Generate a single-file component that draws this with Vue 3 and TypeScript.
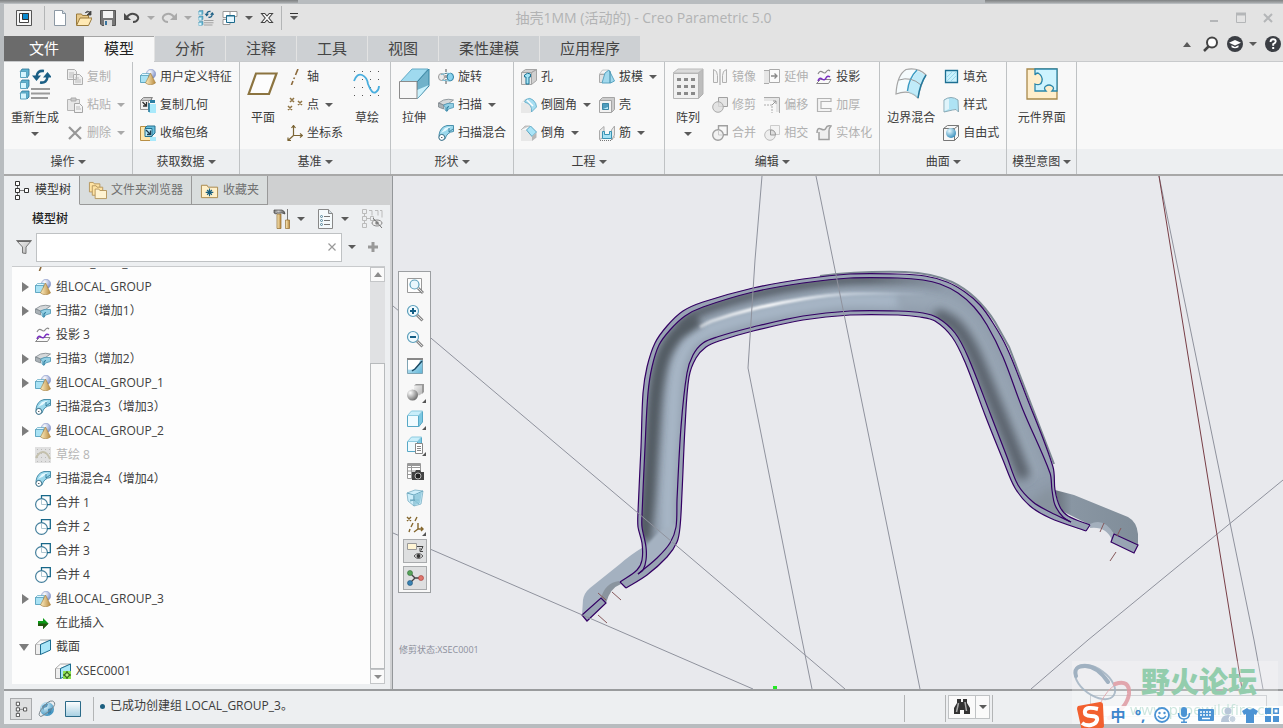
<script setup lang="ts">
import { ref } from 'vue'

interface Tool { label: string; icon: string; drop?: boolean; off?: boolean }
interface Block { big?: boolean; tools: Tool[] }
interface Group { title: string; blocks: Block[] }
interface Node { label: string; icon: string; state?: 'open' | 'closed'; off?: boolean; deep?: boolean }
type Pt = [number, number]

const tabs = ['分析', '注释', '工具', '视图', '柔性建模', '应用程序']

const groups: Group[] = [
  { title: '操作', blocks: [
    { big: true, tools: [{ label: '重新生成', icon: 'regen', drop: true }] },
    { tools: [{ label: '复制', icon: 'copy', off: true }, { label: '粘贴', icon: 'paste', drop: true, off: true }, { label: '删除', icon: 'delete', drop: true, off: true }] },
  ] },
  { title: '获取数据', blocks: [
    { tools: [{ label: '用户定义特征', icon: 'udf' }, { label: '复制几何', icon: 'copygeom' }, { label: '收缩包络', icon: 'shrink' }] },
  ] },
  { title: '基准', blocks: [
    { big: true, tools: [{ label: '平面', icon: 'plane' }] },
    { tools: [{ label: '轴', icon: 'axis' }, { label: '点', icon: 'point', drop: true }, { label: '坐标系', icon: 'csys' }] },
    { big: true, tools: [{ label: '草绘', icon: 'sketch' }] },
  ] },
  { title: '形状', blocks: [
    { big: true, tools: [{ label: '拉伸', icon: 'extrude' }] },
    { tools: [{ label: '旋转', icon: 'revolve' }, { label: '扫描', icon: 'sweep', drop: true }, { label: '扫描混合', icon: 'sweptblend' }] },
  ] },
  { title: '工程', blocks: [
    { tools: [{ label: '孔', icon: 'hole' }, { label: '倒圆角', icon: 'round', drop: true }, { label: '倒角', icon: 'chamfer', drop: true }] },
    { tools: [{ label: '拔模', icon: 'draft', drop: true }, { label: '壳', icon: 'shell' }, { label: '筋', icon: 'rib', drop: true }] },
  ] },
  { title: '编辑', blocks: [
    { big: true, tools: [{ label: '阵列', icon: 'pattern', drop: true }] },
    { tools: [{ label: '镜像', icon: 'mirror', off: true }, { label: '修剪', icon: 'trim', off: true }, { label: '合并', icon: 'mergeoff', off: true }] },
    { tools: [{ label: '延伸', icon: 'extend', off: true }, { label: '偏移', icon: 'offset', off: true }, { label: '相交', icon: 'intersect', off: true }] },
    { tools: [{ label: '投影', icon: 'project' }, { label: '加厚', icon: 'thicken', off: true }, { label: '实体化', icon: 'solidify', off: true }] },
  ] },
  { title: '曲面', blocks: [
    { big: true, tools: [{ label: '边界混合', icon: 'boundary' }] },
    { tools: [{ label: '填充', icon: 'fill' }, { label: '样式', icon: 'style' }, { label: '自由式', icon: 'freestyle' }] },
  ] },
  { title: '模型意图', blocks: [
    { big: true, tools: [{ label: '元件界面', icon: 'puzzle' }] },
  ] },
]

const nodes: Node[] = [
  { label: 'HAND_GRIP_1', icon: 'axis' },
  { label: '组LOCAL_GROUP', icon: 'udf', state: 'closed' },
  { label: '扫描2（增加1）', icon: 'sweep', state: 'closed' },
  { label: '投影 3', icon: 'project' },
  { label: '扫描3（增加2）', icon: 'sweep', state: 'closed' },
  { label: '组LOCAL_GROUP_1', icon: 'udf', state: 'closed' },
  { label: '扫描混合3（增加3）', icon: 'sweptblend' },
  { label: '组LOCAL_GROUP_2', icon: 'udf', state: 'closed' },
  { label: '草绘 8', icon: 'sketchoff', off: true },
  { label: '扫描混合4（增加4）', icon: 'sweptblend' },
  { label: '合并 1', icon: 'merge' },
  { label: '合并 2', icon: 'merge' },
  { label: '合并 3', icon: 'merge' },
  { label: '合并 4', icon: 'merge' },
  { label: '组LOCAL_GROUP_3', icon: 'udf', state: 'closed' },
  { label: '在此插入', icon: 'insert' },
  { label: '截面', icon: 'section', state: 'open' },
  { label: 'XSEC0001', icon: 'xsec', deep: true },
]

const viewTools = [
  { icon: 'refit', name: '重新调整' }, { icon: 'zoomin', name: '放大' }, { icon: 'zoomout', name: '缩小' },
  { icon: 'repaint', name: '重画' }, { icon: 'render', name: '渲染选项', more: true }, { icon: 'display', name: '显示样式', more: true },
  { icon: 'saved', name: '已保存方向', more: true }, { icon: 'viewmgr', name: '视图管理器' }, { icon: 'persp', name: '透视图' },
  { icon: 'datum', name: '基准显示过滤器', more: true }, { icon: 'annot', name: '注释显示', on: true }, { icon: 'spin', name: '旋转中心', on: true },
]

const imeTools = ['smile', 'mic', 'keyboard', 'person', 'shirt', 'grid']

const filterText = ref('')

/* Smooth curve through the given points; tangents are scaled to each segment's length. */
function spline(p: Pt[], start = 'M'): string {
  const len = (a: Pt, b: Pt) => Math.hypot(b[0] - a[0], b[1] - a[1])
  let d = `${start}${p[0][0]} ${p[0][1]}`
  for (let i = 0; i < p.length - 1; i++) {
    const a = p[Math.max(0, i - 1)], b = p[i], c = p[i + 1], e = p[Math.min(p.length - 1, i + 2)]
    const s = len(b, c)
    const k1 = s / (len(a, b) + s) / 3, k2 = s / (s + len(c, e)) / 3
    d += `C${(b[0] + (c[0] - a[0]) * k1).toFixed(1)} ${(b[1] + (c[1] - a[1]) * k1).toFixed(1)} ${(c[0] - (e[0] - b[0]) * k2).toFixed(1)} ${(c[1] - (e[1] - b[1]) * k2).toFixed(1)} ${c[0]} ${c[1]}`
  }
  return d
}

const outerTop: Pt[] = [[620, 582], [637, 570], [642, 560], [642, 543], [638, 527], [638, 512], [641, 447], [643, 393], [647, 367], [655, 343], [667, 326], [683, 311], [703, 302], [753, 288], [803, 279], [850, 274], [898, 274], [925, 276], [947, 282], [965, 292], [980, 305], [993, 323], [1007, 348], [1027, 398], [1053, 467], [1055, 490], [1060, 507], [1068, 516], [1090, 525]]
const innerTop: Pt[] = [[638, 574], [643, 570], [646, 560], [646, 547], [642, 527], [642, 515], [645, 447], [648, 393], [652, 367], [659, 345], [670, 330], [685, 316], [703, 307], [753, 292], [803, 283], [850, 278], [898, 278], [923, 280], [940, 284], [958, 293], [974, 307], [987, 325], [1003, 357], [1023, 410], [1050, 473], [1052, 490], [1055, 505], [1063, 517], [1071, 522]]
const innerLow: Pt[] = [[638, 574], [657, 558], [670, 543], [676, 527], [677, 500], [681, 427], [687, 373], [693, 355], [703, 343], [717, 337], [753, 327], [803, 316], [850, 311], [898, 311], [923, 313], [938, 318], [955, 333], [968, 357], [990, 413], [1007, 457], [1018, 485], [1033, 502], [1050, 512], [1071, 522]]
const outerLow: Pt[] = [[626, 588], [647, 575], [667, 557], [677, 542], [680, 527], [682, 493], [685, 427], [689, 377], [696, 358], [706, 347], [719, 341], [753, 331], [803, 320], [850, 315], [898, 315], [920, 317], [935, 321], [952, 337], [965, 362], [985, 415], [1003, 460], [1015, 488], [1030, 506], [1050, 518], [1086, 531]]
const shadeLeg: Pt[] = [[644, 540], [648, 500], [652, 440], [656, 390], [663, 357], [677, 334], [698, 319]]
const shadeTop: Pt[] = [[680, 328], [700, 312], [753, 295], [803, 285], [850, 280], [898, 280], [925, 282], [945, 289]]
const shadeRight: Pt[] = [[935, 314], [954, 324], [971, 348], [993, 399], [1013, 448], [1025, 478]]
const lightLeft: Pt[] = [[668, 535], [668, 500], [672, 430], [677, 370], [688, 343], [706, 331], [753, 316], [837, 301], [900, 301]]
const lightRight: Pt[] = [[900, 298], [940, 302], [966, 320], [990, 362], [1012, 415], [1035, 478]]
const glint: Pt[] = [[700, 327], [712, 321], [753, 309], [803, 299], [850, 294], [925, 294]]

const reversed = (p: Pt[]) => [...p].reverse()
const bodyPath = spline(outerTop) + spline(reversed(outerLow), 'L') + 'Z'
const tubePath = spline(innerTop) + spline(reversed(innerLow), 'L') + 'Z'
</script>

<template>
  <div class="window">
    <svg class="sprites" aria-hidden="true">
      <defs>
        <linearGradient id="gBlue" x1="0" y1="0" x2="1" y2="1"><stop offset="0" stop-color="#dff6ff" /><stop offset="1" stop-color="#5fb4d6" /></linearGradient>
        <linearGradient id="gGrey" x1="0" y1="0" x2="1" y2="1"><stop offset="0" stop-color="#f2f2f2" /><stop offset="1" stop-color="#b4b4b4" /></linearGradient>
        <linearGradient id="gGold" x1="0" y1="0" x2="1" y2="0"><stop offset="0" stop-color="#fff0c4" /><stop offset="1" stop-color="#b98a3e" /></linearGradient>
        <linearGradient id="gDark" x1="0" y1="0" x2="1" y2="0"><stop offset="0" stop-color="#777" /><stop offset=".4" stop-color="#ccc" /><stop offset="1" stop-color="#555" /></linearGradient>
        <linearGradient id="gPane" x1="0" y1="0" x2="0" y2="1"><stop offset="0" stop-color="#fff" /><stop offset="1" stop-color="#a6cfe2" /></linearGradient>
        <radialGradient id="gBall" cx=".35" cy=".3" r=".8"><stop offset="0" stop-color="#fff" /><stop offset="1" stop-color="#7286c4" /></radialGradient>
        <radialGradient id="gSteel" cx=".3" cy=".3" r=".8"><stop offset="0" stop-color="#fff" /><stop offset="1" stop-color="#666" /></radialGradient>
        <radialGradient id="gGlobe" cx=".35" cy=".3" r=".8"><stop offset="0" stop-color="#e8faff" /><stop offset="1" stop-color="#2a86b8" /></radialGradient>
      </defs>

      <symbol id="appwin" viewBox="0 0 16 16"><path d="M.5.500h15v15H.500z" fill="#f4f4f4" stroke="#555" /><path d="M3.500 3.500h9v9h-9z" fill="#fff" stroke="#444" /><path d="M6.500 3.500h6v6h-6z" fill="#0a8ad0" stroke="#333" /></symbol>
      <symbol id="new" viewBox="0 0 16 16"><path d="M2.500.500h8l3 3v12h-11z" fill="#fff" stroke="#8d99a4" /><path d="M10.500.500v3h3" fill="#d8e2ea" stroke="#8d99a4" /></symbol>
      <symbol id="open" viewBox="0 0 16 16"><path d="M.5 15V4h5l1 1.500h6V8" fill="#e8c98a" stroke="#9a7b3c" /><path d="M.5 15.500 4 8h12l-3.500 7.500z" fill="#ffe9b4" stroke="#9a7b3c" /><path d="M9 3q2-3 5-1m1-1v4h-4z" fill="#444" stroke="#444" stroke-width=".8" /></symbol>
      <symbol id="save" viewBox="0 0 16 16"><path d="M.5.500h15v15H2l-1.500-1.500z" fill="#777" stroke="#555" /><path d="M3 1h10v7H3z" fill="#f4f4f4" /><path d="M4 10h8v6H4z" fill="#ddd" /><path d="M5 11h2v4H5z" fill="#3a76a0" /></symbol>
      <symbol id="undo" viewBox="0 0 16 16"><path d="M3 7q3-4 7-3 5 1.500 4 5-1 3-5 3" fill="none" stroke="#4a4a4a" stroke-width="2" /><path d="M0 3v7h7z" fill="#4a4a4a" /></symbol>
      <symbol id="redo" viewBox="0 0 16 16"><path d="M13 7q-3-4-7-3-5 1.500-4 5 1 3 5 3" fill="none" stroke="#aaa" stroke-width="2" /><path d="M16 3v7H9z" fill="#aaa" /></symbol>
      <symbol id="windows" viewBox="0 0 16 16"><path d="M1 1.500h8v6H1zM1 9.500h7v5H1z" fill="#fff" stroke="#999" /><path d="M8 1.500h7v5H8z" fill="#fff" stroke="#999" /><path d="M4.500 5.500h8v7h-8z" fill="#e3f6ff" stroke="#1d6a8c" /><path d="M4.500 6h8" stroke="#1d6a8c" /></symbol>
      <symbol id="closewin" viewBox="0 0 16 16"><path d="M2.500 3.500h3.200L8 6l2.300-2.500h3.200L9.800 8l3.700 4.500h-3.200L8 10l-2.300 2.500H2.500L6.200 8z" fill="#fff" stroke="#444" stroke-width="1.100" /></symbol>
      <symbol id="search" viewBox="0 0 16 16"><circle cx="9" cy="6.500" r="5" fill="#fff" stroke="#444" stroke-width="2" /><path d="M5.500 10.500 1 15" stroke="#444" stroke-width="2.500" /></symbol>
      <symbol id="learn" viewBox="0 0 16 16"><circle cx="8" cy="8" r="8" fill="#3b3e44" /><path d="M8 4 14 6.800 8 9.500 2 6.800z" fill="#fff" /><path d="M4.500 9.200v2q3.500 2.300 7 0v-2L8 11z" fill="#fff" /></symbol>
      <symbol id="help" viewBox="0 0 16 16"><circle cx="8" cy="8" r="8" fill="#3b3e44" /><path d="M5.500 6q0-2.800 2.600-2.800T10.700 5.600Q10.700 7 8.200 8.200v1.600" fill="none" stroke="#fff" stroke-width="1.900" /><path d="M7.200 11h2v2h-2z" fill="#fff" /></symbol>

      <symbol id="regen" viewBox="0 0 32 32">
        <path d="m1 4 2-3h7v6L8 10M1 15l2-3h7v6l-2 3M1 26l2-3h7v6l-2 2" fill="#5fb3d0" stroke="#2b7596" stroke-width=".8" /><path d="M1.500 3.500H7.500V9.500H1.500zM1.500 14.500H7.500V20.500H1.500zM1.500 25H7.500V31H1.500z" fill="#d5f5fe" stroke="#5aa3bf" />
        <path d="M25 3q-7-1-7.500 6M21 14.500q7 1 7.500-6" fill="none" stroke="#1b5f85" stroke-width="2.600" /><path d="M13 7.500h9L17.500 13zM24 9.500h9L28.500 4z" fill="#1b5f85" /><path d="M12 21h19M12 25.500h19M12 30h17" stroke="#9a9a9a" stroke-width="1.800" />
      </symbol>
      <symbol id="copy" viewBox="0 0 16 16"><path d="M.5.500h7l2 2v8h-9zM6.500 5.500h6l3 3v7h-9z" fill="#eee" stroke="#aeaeae" /><path d="M2 4h5M2 6h4M2 8h4M8 9h4M8 11h6M8 13h6" stroke="#bbb" /></symbol>
      <symbol id="paste" viewBox="0 0 16 16"><path d="M.5 2.500h12v11H.500z" fill="#e6e6e6" stroke="#b5b5b5" /><path d="M4 1h5v3H4z" fill="#ccc" stroke="#aaa" /><path d="M7.500 6.500h5l3 3v6h-8z" fill="#f3f3f3" stroke="#a5a5a5" /><path d="M9 10h4M9 12h5" stroke="#bbb" /></symbol>
      <symbol id="delete" viewBox="0 0 16 16"><path d="m2 2 12 12M14 2 2 14" stroke="#979797" stroke-width="2.200" /></symbol>
      <symbol id="udf" viewBox="0 0 16 16"><circle cx="11" cy="5" r="4.700" fill="url(#gBall)" stroke="#7f8fc4" stroke-width=".5" /><path d="M.5 6.500h8v7h-8z" fill="#a9e2f4" stroke="#4597b6" stroke-width=".8" /><path d="m.5 6.500 2-2h7l-1 2z" fill="#e2f8ff" stroke="#4597b6" stroke-width=".6" /><path d="m10.500 4 5 10q-5 3.500-10 0z" fill="url(#gGold)" stroke="#a37b36" stroke-width=".6" /></symbol>
      <symbol id="copygeom" viewBox="0 0 16 16"><path d="m.5 3.500 3-3h9l-2 3zM11.500.5v5" fill="#ccc" stroke="#888" /><path d="M.5 3.500h8v9h-8z" fill="#f1f1f1" stroke="#999" /><path d="m2.500 5 3.500 3.500M6.500 5v4H3" stroke="#333" stroke-width="1.300" fill="none" /><path d="M9 7h7v9H9z" fill="#a9e9fb" /><path d="M9 6v9" stroke="#1b6f94" stroke-width="1.500" /><path d="M10 3h5v3h-5z" fill="#2b7ea3" /></symbol>
      <symbol id="shrink" viewBox="0 0 16 16"><path d="M.5 1.500h11v14H.500z" fill="#ffe7ad" stroke="#b88f45" /><path d="m5 3 2-2h8v7l-3 3" fill="#68bedc" stroke="#24708f" /><path d="M5 3.500h7v8H5z" fill="#b9ebfa" stroke="#24708f" /><path d="m6 5 4 4M10.500 5.500V9.500H7" stroke="#1d3c50" stroke-width="1.300" fill="none" /><path d="M10 12h6v4h-6z" fill="#a9e9fb" /></symbol>
      <symbol id="plane" viewBox="0 0 32 32"><path d="M9 5.500H29.500L22 26H1.700z" fill="#fdfdfd" stroke="#8c7440" stroke-width="2.200" /></symbol>
      <symbol id="axis" viewBox="0 0 16 16"><path d="M11 0 8.500 6M7.500 8.500 6.800 10M6 12l-1.600 4" stroke="#8c6a3c" stroke-width="1.600" /></symbol>
      <symbol id="point" viewBox="0 0 16 16"><path d="m3 1 4 4m0-4L3 5m8-1 4 4m0-4-4 4M1 9l4 4m0-4-4 4" stroke="#8f7444" stroke-width="1.500" /></symbol>
      <symbol id="csys" viewBox="0 0 16 16"><path d="M6.500 1v9.500H15M6.500 10.500 1 15.500M4.500 3l2-2.500 2 2.500M13 8.500l2.500 2-2.500 2M1 12.500v3h3" fill="none" stroke="#7b6434" stroke-width="1.200" /></symbol>
      <symbol id="sketch" viewBox="0 0 32 32"><path d="M3 3.500h28M3 11.500h28M3 19.500h28M3 27.500h28" stroke="#555" stroke-dasharray="1 7" /><path d="M3 13Q6 5 11 7t6 9q4 11 8 8 3-2 3-6" fill="none" stroke="#49aede" stroke-width="1.800" /></symbol>
      <symbol id="extrude" viewBox="0 0 32 32"><path d="m2 14 12-13h16L19 14z" fill="#9fdaef" stroke="#64abc6" /><path d="m19 14 12-13v17L19 31z" fill="#70b2ca" stroke="#3584a2" /><path d="m19 22 12-5-12 14z" fill="#caf1fc" /><path d="M1.500 13.500H19v17H1.500z" fill="#f7f7f7" stroke="#8b8b8b" /></symbol>
      <symbol id="revolve" viewBox="0 0 16 16"><ellipse cx="3.500" cy="8" rx="3" ry="3.500" fill="#eaeaea" stroke="#999" /><ellipse cx="12.300" cy="8" rx="3.200" ry="3.800" fill="#8bd3ee" stroke="#2a7ea1" /><path d="M3 5.500q6-2 10-1M4 11q5 1 8 1" fill="none" stroke="#6fb6cf" /><path d="M8 0v16" stroke="#555" stroke-dasharray="3 1 1 1" /></symbol>
      <symbol id="sweep" viewBox="0 0 16 16"><path d="m.5 6 5-3q5-1.500 10 0l-5 3.500-5 1.500z" fill="#d5d8da" stroke="#7e868b" stroke-width=".8" /><path d="m.5 6 5 2v4l-5-2z" fill="#a9b1b6" stroke="#7e868b" stroke-width=".8" /><path d="M5.500 8q4-2.500 10-1.500v4l-5 1.500-1.500 2.500L7 13v-3z" fill="#93cfe4" stroke="#4a94b2" stroke-width=".8" /><path d="M9 14v-3.500l2-1" fill="none" stroke="#1e6f91" /></symbol>
      <symbol id="sweptblend" viewBox="0 0 16 16"><path d="M1 10q1-8 8-9.500h6.500v6Q9 7 7 14l-4 1.500Q.5 14 1 10z" fill="#9bd8ec" stroke="#3b86a4" stroke-width=".9" /><path d="m3 8 4-5 6-1.500-5 4z" fill="#e5f9ff" /><ellipse cx="3.800" cy="12.400" rx="2.900" ry="3" fill="#fff" stroke="#3e7087" /><path d="M3.300 12h1v1h-1z" fill="#222" /><path d="M11 3v4l4-3" fill="none" stroke="#26708f" stroke-width=".8" /></symbol>
      <symbol id="hole" viewBox="0 0 16 16"><path d="m.5 3.500 4-3h11l-5 3zM10.500 3.500l5-3v11l-5 4z" fill="#d0d0d0" stroke="#a5a5a5" /><path d="M.5 3.500h10v12H.500z" fill="#e8e8e8" stroke="#a5a5a5" /><path d="M3.500 6q3-3 6-1v3H8v7H5V8H3.500z" fill="#a5e4f6" stroke="#1b7394" /></symbol>
      <symbol id="round" viewBox="0 0 16 16"><path d="M0 6h10v10H0z" fill="#e8e8e8" /><path d="M0 6 4 2h5" fill="#ddd" /><path d="M5 2.500Q9 0 12 3q3.500 3 3.500 7l-5 5q1-8-7-10z" fill="#a6def2" stroke="#5aa5c2" stroke-width=".8" /><path d="m6 3 6 6" stroke="#fff" stroke-width="1.500" /></symbol>
      <symbol id="chamfer" viewBox="0 0 16 16"><path d="M0 5h7l4 5v6H0z" fill="#e8e8e8" /><path d="m0 5 4-4h5" fill="#ccc" stroke="#aaa" stroke-width=".7" /><path d="m5.500 5 4-4 6 6-4.500 4.500z" fill="#a9e4f7" stroke="#5aa5c2" /><path d="m11 11.500 4.500-4v5L11 16z" fill="#b7b7b7" /></symbol>
      <symbol id="draft" viewBox="0 0 16 16"><path d="M.5 5.500h6v8h-6z" fill="#e2e2e2" stroke="#aaa" /><path d="m.5 5 3-4h6l-3 4z" fill="#f4f4f4" stroke="#aaa" stroke-width=".6" /><path d="m6 4 4-3 5.500 11-4 2H3z" fill="#a2d9ed" stroke="#5aa5c2" /><path d="M11 2v12" stroke="#3b86a4" /></symbol>
      <symbol id="shell" viewBox="0 0 16 16"><path d="m.5 3.500 3-3h12v12l-3 3" fill="#ccc" stroke="#a5a5a5" /><path d="M.5 3.500h12v12H.500z" fill="#f2f2f2" stroke="#a5a5a5" /><path d="M3.500 6.500h6v6h-6z" fill="#4f9cbd" stroke="#3b86a4" /><path d="m4 12 5-2v2z" fill="#b9eafa" /></symbol>
      <symbol id="rib" viewBox="0 0 16 16"><path d="M.5 5.500 5 1.500v11l-4.500 2zM12.500 5l3-4v9l-3 5z" fill="#e9e9e9" stroke="#aaa" /><path d="M3.500 6.500h2v3h5v-3h2v7h-9z" fill="#a6e2f5" stroke="#3b93b3" /><path d="M1 15.500h11l4-4" stroke="#777" fill="none" stroke-dasharray="1 1" /></symbol>
      <symbol id="pattern" viewBox="0 0 32 32"><path d="m26 5 5-4v25l-5 5z" fill="#bdbdbd" stroke="#b0b0b0" /><path d="m1 5 5-4h25l-5 4z" fill="#dadada" stroke="#bbb" /><path d="M1.500 5.500h25v25h-25z" fill="#f0f0f0" stroke="#b5b5b5" /><path d="M5 10h4v3H5zm7 0h4v3h-4zm7 0h4v3h-4zM5 17h4v3H5zm7 0h4v3h-4zm7 0h4v3h-4zM5 24h4v3H5zm7 0h4v3h-4zm7 0h4v3h-4z" fill="#8a8a8a" /></symbol>
      <symbol id="mirror" viewBox="0 0 16 16"><path d="M1.500.500q4 1 4 6v7h-4zM14.500.500q-4 1-4 6v7h4z" fill="#f3f3f3" stroke="#b0b0b0" /><path d="M8 0v16" stroke="#999" /></symbol>
      <symbol id="trim" viewBox="0 0 16 16"><path d="M6.500.500h9v9h-9z" fill="#e5e5e5" stroke="#a0a0a0" /><circle cx="6" cy="10" r="5.300" fill="#ddd" fill-opacity=".8" stroke="#aaa" /></symbol>
      <symbol id="mergeoff" viewBox="0 0 16 16"><circle cx="6" cy="10" r="5.300" fill="#f2f2f2" stroke="#a0a0a0" stroke-width="1.400" /><path d="M6.500 5V.700h8.800v9H11" fill="none" stroke="#a0a0a0" stroke-width="1.400" /><path d="M6.500 5v5H11" fill="none" stroke="#ccc" /></symbol>
      <symbol id="merge" viewBox="0 0 16 16"><circle cx="6.500" cy="9.500" r="5.900" fill="#fff" stroke="#447f9c" stroke-width="1.200" /><path d="M6.500 3.500V.700h8.800v9H12" fill="none" stroke="#176789" stroke-width="1.300" /><path d="M6.500 4v5.500H12" fill="none" stroke="#b2c8d2" /></symbol>
      <symbol id="extend" viewBox="0 0 16 16"><path d="M0 2h6v12H0" fill="#e6e6e6" /><path d="M0 1.500h5M0 14.500h5" stroke="#aaa" /><path d="M5.500.500h10v13h-10z" fill="#fafafa" stroke="#aaa" /><path d="M7 7h6m-2.500-2.500L13 7l-2.500 2.500" stroke="#888" stroke-width="1.300" fill="none" /></symbol>
      <symbol id="offset" viewBox="0 0 16 16"><path d="M0 .500h15.500V16" stroke="#aaa" fill="none" /><path d="M0 1h15v14h-3V4H0z" fill="#e5e5e5" /><path d="M0 8h8v8" stroke="#aaa" stroke-dasharray="2 1" fill="none" /><path d="m8 8 4-4m-3 0h3v3" stroke="#999" fill="none" /></symbol>
      <symbol id="intersect" viewBox="0 0 16 16"><path d="M6.500.500h9v9h-9z" fill="#f4f4f4" stroke="#ccc" /><circle cx="6" cy="10" r="5.300" fill="#eee" stroke="#bbb" /><path d="M6.500 5q5 0 5 5h-5z" fill="#ddd" stroke="#999" /></symbol>
      <symbol id="project" viewBox="0 0 16 16"><path d="M2 5q2-4 4.500-2T10 3q2-3 4-1" fill="none" stroke="#888" stroke-width="1.200" /><path d="m.5 14.500 4-4H15l-2.500 4z" fill="#fafafa" stroke="#888" /><path d="M2 12q1.500-4 4-2t4-1 4-1" fill="none" stroke="#7a2fc0" stroke-width="1.600" /></symbol>
      <symbol id="thicken" viewBox="0 0 16 16"><path d="M15 1.500H1.500v13H15v-3H5v-7h10z" fill="#f4f4f4" stroke="#b3b3b3" stroke-width="1.200" /></symbol>
      <symbol id="solidify" viewBox="0 0 16 16"><path d="M1 8Q1 2 5 4t5-1 5-2q-2 2-2 5v8.500H3V7" fill="#efefef" stroke="#a0a0a0" stroke-width="1.500" /></symbol>
      <symbol id="boundary" viewBox="0 0 32 32"><path d="M1 26Q2 7 11 1.500 23-1 31 7q-5 8-8 23-8-9-22-4z" fill="#f5fbfd" stroke="#a5a5a5" stroke-width="1.200" /><path d="M22.500 3Q15 11 13 24q6 2 10 6 3-15 8-22-4-4-8.500-5z" fill="#a9e4f6" fill-opacity=".7" /><path d="M22 2Q14 10 12.500 23" fill="none" stroke="#3a9cc4" stroke-width="1.500" /><path d="M4 12q12-4 22 5" fill="none" stroke="#9a9a9a" /><path d="M31 7q-6 9-8 23" fill="none" stroke="#24789c" stroke-width="1.500" /></symbol>
      <symbol id="fill" viewBox="0 0 16 16"><path d="M2.500 1.500h12v12h-12z" fill="#c9f1fd" stroke="#1d6f92" stroke-width="1.300" /><path d="m4 8 5-5m-5 9 9-9m-5 9 5-5" stroke="#9ad8ec" /></symbol>
      <symbol id="style" viewBox="0 0 16 16"><path d="M1 3q7-5 14 0l.5 12q-2-4-6-2L1 15z" fill="#aee3f4" stroke="#8aa9b5" /><path d="M1.500 3.500Q5 1 6 2v10l-4.500 2z" fill="#fff" opacity=".6" /></symbol>
      <symbol id="freestyle" viewBox="0 0 16 16"><path d="m.5 3.500 4-3h11v11l-4 4H.500z M.5 3.500h11v12m0-12 4-3" fill="none" stroke="#777" /><circle cx="8" cy="8" r="5" fill="url(#gGlobe)" /></symbol>
      <symbol id="puzzle" viewBox="0 0 32 32"><path d="M1 1h30v30H1z" fill="#ffeecb" stroke="#a8894c" stroke-width="1.300" /><path d="M9 1h22v22h-5q3-3 0-5-3-2-6 0-3 2 0 5H9v-7q6 2 7-3t-4-8q-2 0-3 2z" fill="#cdf3fe" stroke="#2a86aa" stroke-width="1.300" /></symbol>

      <symbol id="treetab" viewBox="0 0 16 20"><path d="M1.500 1.500h4v4h-4zM1.500 8.500h4v4h-4zM1.500 15.500h4v4h-4zM10.500 8.500h4v4h-4z" fill="#fff" stroke="#333" /><path d="M3.500 6v2M3.500 13v2M6 10.500h4" stroke="#777" /></symbol>
      <symbol id="folders" viewBox="0 0 20 20"><g fill="#ffe3a3" stroke="#b5975f"><path d="M1.500 11.500v-10h4l1 1.500h6v8.500z" /><path d="M4.500 15v-10h4l1 1.500h6V15z" /><path d="M7.500 18.500v-10h4l1 1.500h7v8.500z" fill="#fff3d2" /></g></symbol>
      <symbol id="favs" viewBox="0 0 20 20"><path d="M1.500 17.500v-13h6l1 2h10v11z" fill="#fff0c9" stroke="#a9874a" /><path d="M10 8v8M6 12h8M7.500 9.500l5 5M12.500 9.500l-5 5" stroke="#185f80" stroke-width="1.200" /></symbol>
      <symbol id="hammer" viewBox="0 0 18 20"><path d="M4 5h4v14.500H4z" fill="url(#gGold)" stroke="#8f6a2c" stroke-width=".7" /><path d="M1 4V1h8q3 1 3 4l-3-1H4L3 5z" fill="url(#gDark)" stroke="#444" stroke-width=".7" /><path d="M14 0h1v11h-1z" fill="#777" /><path d="M12.500 11h4v8.500h-4z" fill="url(#gGold)" stroke="#8f6a2c" stroke-width=".7" /></symbol>
      <symbol id="listset" viewBox="0 0 18 20"><path d="M1.500.500h10l4 4v15h-14z" fill="#f5fafc" stroke="#888" /><path d="M11.500.500v4h4" fill="#cfdbe2" stroke="#888" /><path d="M7 7.500h6M7 11.500h6M7 15.500h6" stroke="#777" /><g fill="none" stroke="#39718a" stroke-width=".8"><circle cx="4.500" cy="7.500" r="1" /><circle cx="4.500" cy="11.500" r="1" /><circle cx="4.500" cy="15.500" r="1" /></g></symbol>
      <symbol id="hidetree" viewBox="0 0 22 20"><path d="M1.500.500h4v4h-4zM1.500 7.500h4v4h-4zM1.500 14.500h4v4h-4zM9.500 7.500h3v4h-3zM3.500 5v2m0 5v2M6 9.500h3M8 1.500h3v5m3-5h3v5m2-5h2v7" fill="none" stroke="#bbb" /><ellipse cx="16" cy="14" rx="5" ry="3" fill="#eee" stroke="#888" /><circle cx="16" cy="14" r="1.800" fill="#888" /><path d="m12 9 9 10" stroke="#777" /></symbol>
      <symbol id="funnel" viewBox="0 0 16 16"><path d="M.5 1.500h15L10 8v6.500l-3.500-.500V8z" fill="url(#gGrey)" stroke="#777" /><path d="M1.500 2.500h13" stroke="#666" /></symbol>
      <symbol id="sketchoff" viewBox="0 0 16 16"><path d="M0 0h16v16H0z" fill="#e0e0e0" /><path d="M2 2.500h13M2 6.500h13M2 10.500h13M2 14.500h13" stroke="#bbb" stroke-dasharray="1 3" /><path d="M1 11q3-6 7-6t7 7" fill="none" stroke="#c4c0ad" stroke-width="2" /></symbol>
      <symbol id="insert" viewBox="0 0 16 16"><path d="M3 6h5V3l5.500 5.500L8 14v-3H3z" fill="#0b9a16" /><path d="M3 8.500h10.500L8 14v-3H3z" fill="#25560f" /></symbol>
      <symbol id="section" viewBox="0 0 16 16"><path d="M.5 5.500h5v10h-5z" fill="#eee" stroke="#999" /><path d="m.5 5.500 5-4.500h10l-10 4.500" fill="#fafafa" stroke="#aaa" /><path d="m5.500 5.500 10-4.500v10l-10 4.500z" fill="#aae6f8" stroke="#1b6c90" /></symbol>
      <symbol id="xsec" viewBox="0 0 16 16"><path d="M.5 5.500h5v10h-5z" fill="#eee" stroke="#999" /><path d="m.5 5.500 5-4.500h10l-10 4.500" fill="#fafafa" stroke="#aaa" /><path d="m5.500 5.500 10-4.500v10l-10 4.500z" fill="#aae6f8" stroke="#1b6c90" /><path d="M8 8h8v8H8z" fill="#8ce04e" /><circle cx="12" cy="12" r="2.200" fill="#baf28c" stroke="#204d0b" /><path d="M12 8v2m0 4v2m-4-4h2m4 0h2" stroke="#204d0b" /></symbol>

      <symbol id="refit" viewBox="0 0 18 18"><path d="M1.500 1.500h14v14h-14z" fill="#fff" stroke="#999" /><circle cx="8.500" cy="7.500" r="4.500" fill="#e9f7fd" stroke="#5c9fbb" stroke-width="1.200" /><path d="m12 11 5 5" stroke="#888" stroke-width="3" /><path d="m12 11 4.500 4.500" stroke="#ddd" /></symbol>
      <symbol id="zoomin" viewBox="0 0 18 18"><circle cx="7" cy="7" r="5.500" fill="#f0fafe" stroke="#5c9fbb" stroke-width="1.200" /><path d="M4 7h6M7 4v6" stroke="#155f86" stroke-width="2" /><path d="m11 11 5.500 5.500" stroke="#888" stroke-width="3" /><path d="m11.500 11.500 4.500 4.500" stroke="#ddd" /></symbol>
      <symbol id="zoomout" viewBox="0 0 18 18"><circle cx="7" cy="7" r="5.500" fill="#f0fafe" stroke="#5c9fbb" stroke-width="1.200" /><path d="M4 7h6" stroke="#155f86" stroke-width="2" /><path d="m11 11 5.500 5.500" stroke="#888" stroke-width="3" /><path d="m11.500 11.500 4.500 4.500" stroke="#ddd" /></symbol>
      <symbol id="repaint" viewBox="0 0 18 18"><path d="M1.500 1.500h15v15h-15z" fill="url(#gBlue)" stroke="#7fa5b5" /><path d="M1 1h16v2H1z" fill="#888" /><path d="M2 3h12q-1 7-6 9-3 1-6 .5z" fill="#fff" /><path d="m6 14 3-2 7-8" stroke="#1b4a63" stroke-width="1.500" fill="none" /></symbol>
      <symbol id="render" viewBox="0 0 18 18"><path d="M8 2.500h8v8l-3 2-5-2z" fill="url(#gGrey)" /><path d="m8 2.500 2-1.500h8l-2 1.500zM16 2.500 18 1v8l-2 2z" fill="#999" /><circle cx="6.500" cy="12" r="5.500" fill="url(#gSteel)" /></symbol>
      <symbol id="display" viewBox="0 0 18 18"><path d="m12.500 5 4-4v11l-4 5z" fill="#7cc8e2" stroke="#57a8c6" /><path d="M1.500 5.500h11v11h-11z" fill="#f0fbff" stroke="#57a8c6" /><path d="m1.500 5.500 4-4.500h11l-4 4.500z" fill="#c9eefa" stroke="#8ecbe0" /></symbol>
      <symbol id="saved" viewBox="0 0 18 18"><path d="m11.500 5 4-4v10l-4 4z" fill="#7cc8e2" stroke="#57a8c6" /><path d="M1.500 5.500h10v10h-10z" fill="#f0fbff" stroke="#57a8c6" /><path d="m1.500 5.500 4-4.500h10l-4 4.500z" fill="#c9eefa" stroke="#8ecbe0" /><path d="M9.500 7.500h7v10h-7z" fill="#fff" stroke="#888" /><path d="M11 10.500h4M11 12.500h4M11 14.500h4" stroke="#888" /></symbol>
      <symbol id="viewmgr" viewBox="0 0 18 18"><path d="M1.500.500h13v15h-13zM5.500.500v15M1.500 4.500h13M1.500 8h13M1.500 11.500h13" fill="#fff" stroke="#999" /><path d="M1 1h14v2H1z" fill="#999" /><path d="M6 9h3l1-2h4l1 2h3v8H6z" fill="#444" /><circle cx="12" cy="13" r="3" fill="#222" stroke="#bbb" /></symbol>
      <symbol id="persp" viewBox="0 0 18 18"><path d="m1 4 8-3 8 1-2 13-7 2-6-5z" fill="#cdeefa" stroke="#8fbdcf" /><path d="m1 4 7 2v11M8 6l9-4M4 11h9m-5-4v4l-4 1m4-1 5 4" fill="none" stroke="#6aa7be" /><path d="m9 6 7-3-2 11-5 2z" fill="#8cc5da" opacity=".8" /></symbol>
      <symbol id="datum" viewBox="0 0 18 18"><path d="m1 1 4 4m0-4L1 5M11 1 9 5M7 7l-2 4m-1 2-1 3M12 7v6h5m-5 0-4 3m7-5 2 2-2 2" fill="none" stroke="#84662c" stroke-width="1.400" /></symbol>
      <symbol id="annot" viewBox="0 0 18 18"><path d="M1.500 1.500h9v6h-9z" fill="#fff5d5" stroke="#999" /><path d="M11 4.500h6l-2 4m-1-2.500v3.500h3" fill="none" stroke="#444" /><path d="M8 14q4.500-5 9 0-4.500 5-9 0z" fill="#eee" stroke="#555" /><circle cx="12.500" cy="14" r="2" fill="#333" /></symbol>
      <symbol id="spin" viewBox="0 0 18 18"><path d="m4 4 5 5h6M9 9l-5 5" stroke="#444" stroke-width="1.300" fill="none" /><circle cx="4" cy="4" r="2.500" fill="#57a35a" stroke="#2e6d34" stroke-width=".6" /><circle cx="15" cy="9" r="2.500" fill="#e0766d" stroke="#a63b35" stroke-width=".6" /><circle cx="4" cy="14" r="2.500" fill="#3a83b3" stroke="#1b5279" stroke-width=".6" /></symbol>
      <symbol id="globe" viewBox="0 0 18 18"><circle cx="9" cy="9" r="7" fill="url(#gGlobe)" /><path d="M4 6q3-3 6-2l-1 3-3 1-1 3zM10 9l4-1-1 5-3 1z" fill="#2675a5" opacity=".7" /><path d="M2 16Q-1 14 6 6T16.500 2.500Q18 6 10 12T2 16z" fill="none" stroke="#7a858c" /></symbol>
      <symbol id="blank" viewBox="0 0 18 18"><path d="M1.500 1.500h15v15h-15z" fill="url(#gPane)" stroke="#2b6a88" /></symbol>
      <symbol id="binoc" viewBox="0 0 18 18"><path d="M4 1h4v3h2V1h4v4l3 5v6h-6v-4H7v4H1v-6l3-5z" fill="#333" /><path d="M5.500 5 3.500 14M12 4l1.500 9" stroke="#aaa" stroke-width="1.500" /></symbol>

      <symbol id="smile" viewBox="0 0 16 16"><circle cx="8" cy="8" r="7" fill="#fff" stroke="#4b93d4" stroke-width="1.800" /><circle cx="5.500" cy="6" r="1.200" fill="#4b93d4" /><circle cx="10.500" cy="6" r="1.200" fill="#4b93d4" /><path d="M4 9q4 5 8 0" fill="none" stroke="#4b93d4" stroke-width="1.400" /></symbol>
      <symbol id="mic" viewBox="0 0 16 16"><rect x="5" y="0" width="6" height="10" rx="3" fill="#4b93d4" /><path d="M2.500 6q0 6 5.500 6t5.500-6M8 12v4M5 15.300h6" fill="none" stroke="#4b93d4" stroke-width="1.500" /></symbol>
      <symbol id="keyboard" viewBox="0 0 16 16"><rect x="0" y="2" width="16" height="12" rx="1" fill="#4b93d4" /><path d="M2 5h12M2 8h12" stroke="#fff" stroke-width="1.600" stroke-dasharray="2 1" /><path d="M4 11.500h8" stroke="#fff" stroke-width="1.500" /></symbol>
      <symbol id="person" viewBox="0 0 16 16"><circle cx="8" cy="4" r="3.500" fill="#b8c6d8" /><path d="M1 15q0-7 7-7t7 7z" fill="#b8c6d8" /><circle cx="12.500" cy="12" r="3.500" fill="#c7d3e0" stroke="#fff" /></symbol>
      <symbol id="shirt" viewBox="0 0 16 16"><path d="M5 1q3 3 6 0l5 3-2 4-2-1v9H4V7L2 8 0 4z" fill="#4b93d4" /></symbol>
      <symbol id="grid" viewBox="0 0 16 16"><path d="M1 1h6v6H1zM9 9h6v6H9zM1 9h6v6H1z" fill="#4b93d4" /><path d="M9.800 1.800h4.500v4.500H9.800z" fill="#fff" stroke="#4b93d4" stroke-width="1.500" /></symbol>
    </svg>

    <div class="edge" aria-hidden="true"><span></span><span></span></div>

    <header class="titlebar">
      <div class="quick">
        <button class="q home" aria-label="窗口"><svg class="i16"><use href="#appwin" /></svg></button>
        <i class="bar"></i>
        <button class="q" aria-label="新建"><svg class="i16"><use href="#new" /></svg></button>
        <button class="q" aria-label="打开"><svg class="i16"><use href="#open" /></svg></button>
        <button class="q" aria-label="保存"><svg class="i16"><use href="#save" /></svg></button>
        <button class="q" aria-label="撤消"><svg class="i16"><use href="#undo" /></svg></button>
        <button class="qd" aria-label="撤消列表"><i class="tri pale"></i></button>
        <button class="q" aria-label="重做"><svg class="i16"><use href="#redo" /></svg></button>
        <button class="qd" aria-label="重做列表"><i class="tri pale"></i></button>
        <button class="q" aria-label="重新生成"><svg class="i16"><use href="#regen" /></svg></button>
        <button class="q" aria-label="窗口列表"><svg class="i16"><use href="#windows" /></svg></button>
        <button class="qd" aria-label="窗口菜单"><i class="tri"></i></button>
        <button class="q last" aria-label="关闭窗口"><svg class="i16"><use href="#closewin" /></svg></button>
        <i class="bar"></i>
        <button class="q slimq" aria-label="自定义快速访问工具栏"><i class="tri lined"></i></button>
      </div>
      <h1>抽壳1MM (活动的) - Creo Parametric 5.0</h1>
      <div class="winctl">
        <button aria-label="最小化"><svg class="i12" viewBox="0 0 12 12"><path d="M2 9h8" stroke="#b4b6b8" stroke-width="2" /></svg></button>
        <button aria-label="最大化"><svg class="i12" viewBox="0 0 12 12"><path d="M1.500 2v8.500h9V2" fill="none" stroke="#b4b6b8" /><path d="M1 2h10" stroke="#b4b6b8" stroke-width="3" /></svg></button>
        <button aria-label="关闭"><svg class="i12" viewBox="0 0 12 12"><path d="m2 2 8 8m0-8-8 8" stroke="#b4b6b8" stroke-width="2" /></svg></button>
      </div>
    </header>

    <nav class="tabs">
      <button class="file">文件</button>
      <button class="active">模型</button>
      <button v-for="t in tabs" :key="t">{{ t }}</button>
      <div class="aids">
        <button aria-label="最小化功能区"><i class="tri up"></i></button>
        <button aria-label="命令搜索"><svg class="i16"><use href="#search" /></svg></button>
        <button aria-label="学习中心"><svg class="i16"><use href="#learn" /></svg></button>
        <button class="slim" aria-label="学习菜单"><i class="tri"></i></button>
        <button class="helpb" aria-label="帮助"><svg class="i16"><use href="#help" /></svg></button>
      </div>
    </nav>

    <div class="ribbon">
      <section v-for="g in groups" :key="g.title" class="group">
        <div class="gbody">
          <div v-for="(b, i) in g.blocks" :key="i" :class="b.big ? 'bigcol' : 'col'">
            <button v-for="t in b.tools" :key="t.label" :disabled="t.off" :class="b.big ? 'big' : 'small'">
              <svg :class="b.big ? 'i32' : 'i16'"><use :href="'#' + t.icon" /></svg>
              <span>{{ t.label }}</span>
              <i v-if="t.drop" class="tri" :class="{ pale: t.off }"></i>
            </button>
          </div>
        </div>
        <button class="gfoot">{{ g.title }}<i class="tri"></i></button>
      </section>
      <div class="rest"></div>
    </div>

    <main>
      <aside>
        <div class="sidetabs">
          <button class="on"><svg class="tab-ic"><use href="#treetab" /></svg>模型树</button>
          <button><svg class="i19"><use href="#folders" /></svg>文件夹浏览器</button>
          <button><svg class="i19"><use href="#favs" /></svg>收藏夹</button>
        </div>
        <div class="sidehead">
          <h2>模型树</h2>
          <button aria-label="设置"><svg class="i18t"><use href="#hammer" /></svg><i class="tri"></i></button>
          <button aria-label="显示"><svg class="i18t"><use href="#listset" /></svg><i class="tri"></i></button>
          <button aria-label="隐藏树"><svg class="i22"><use href="#hidetree" /></svg></button>
        </div>
        <div class="filter">
          <svg class="i16"><use href="#funnel" /></svg>
          <div class="field">
            <input v-model="filterText" type="text" aria-label="过滤模型树" />
            <button aria-label="清除" @click="filterText = ''"><svg viewBox="0 0 8 8"><path d="m.5.500 7 7m0-7-7 7" stroke="#999" stroke-width="1.200" /></svg></button>
          </div>
          <button class="fd" aria-label="过滤选项"><i class="tri"></i></button>
          <button class="fa" aria-label="添加"><svg viewBox="0 0 12 12"><path d="M6 1v10M1 6h10" stroke="#999" stroke-width="3" /></svg></button>
        </div>
        <div class="treebox">
          <ul>
            <li v-for="n in nodes" :key="n.label" :class="{ off: n.off, deep: n.deep }">
              <button v-if="n.state" class="exp" :class="n.state" :aria-label="'展开 ' + n.label"></button>
              <i v-else class="exp"></i>
              <svg class="i16"><use :href="'#' + n.icon" /></svg>
              <span>{{ n.label }}</span>
            </li>
          </ul>
          <div class="scroll">
            <button aria-label="向上滚动"><i class="tri up grey"></i></button>
            <div class="track"><div class="thumb"></div></div>
            <button aria-label="向下滚动"><i class="tri grey"></i></button>
          </div>
        </div>
      </aside>

      <div class="stage">
        <svg class="scene" viewBox="393 176 890 513" preserveAspectRatio="xMinYMin slice" role="img" aria-label="抽壳1MM 模型">
          <defs>
            <clipPath id="tube"><path :d="tubePath" /></clipPath>
            <filter id="soft" x="-20%" y="-20%" width="140%" height="140%"><feGaussianBlur stdDeviation="5" /></filter>
            <filter id="mid" x="-20%" y="-20%" width="140%" height="140%"><feGaussianBlur stdDeviation="3.500" /></filter>
            <filter id="fine" x="-20%" y="-20%" width="140%" height="140%"><feGaussianBlur stdDeviation="1" /></filter>
            <linearGradient id="gGlint" gradientUnits="userSpaceOnUse" x1="700" y1="0" x2="930" y2="0"><stop offset="0" stop-color="#fff" stop-opacity=".5" /><stop offset=".3" stop-color="#fff" /><stop offset="1" stop-color="#cfdcec" stop-opacity="0" /></linearGradient>
            <linearGradient id="gFoot" x1="0" y1="0" x2="1" y2="0"><stop offset="0" stop-color="#69727c" /><stop offset=".2" stop-color="#8996a3" /><stop offset="1" stop-color="#808d99" /></linearGradient>
            <linearGradient id="gTopShade" gradientUnits="userSpaceOnUse" x1="680" y1="0" x2="950" y2="0"><stop offset="0" stop-color="#59616a" /><stop offset=".7" stop-color="#59616a" /><stop offset="1" stop-color="#59616a" stop-opacity="0" /></linearGradient>
          </defs>
          <path d="M645 546Q630 555 620 564L590 588Q584 593 583 600L582 615L587 621L606 603Q605 592 614 584L620 582L640 576L655 560Z" fill="#a4b1c0" />
          <path d="M601 598Q605 583 619 581L621 584Q610 588 606 603Z" fill="#8a949e" />
          <path d="M1055 490L1074 495L1128 517Q1137 522 1138 534V546L1114 534Q1108 524 1090 525L1060 510Z" fill="url(#gFoot)" />
          <path d="M1090 524Q1104 517 1114 534L1112 540Q1106 526 1090 528Z" fill="#a3afbc" />
          <path d="M582 615L601 598L606 603L587 621ZM1114 534L1138 545L1134 553L1111 542Z" fill="#98a4b4" stroke="#340064" stroke-width="1.200" />
          <path d="M820 276Q860 271 905 272Q932 273 952 282Q977 294 995 322L1009 347L1054 464" fill="none" stroke="#7d8993" stroke-width="2" />
          <path :d="bodyPath" fill="#98a3b3" />
          <g clip-path="url(#tube)">
            <path :d="tubePath" fill="#909dac" />
            <path :d="spline(lightLeft)" fill="none" stroke="#a9b8c8" stroke-width="14" filter="url(#soft)" />
            <path :d="spline(lightRight)" fill="none" stroke="#9aa7b6" stroke-width="16" filter="url(#soft)" />
            <path :d="spline(shadeTop)" fill="none" stroke="url(#gTopShade)" stroke-width="9" filter="url(#mid)" />
            <path :d="spline(shadeLeg)" fill="none" stroke="#535b64" stroke-width="14" filter="url(#mid)" />
            <path :d="spline(shadeRight)" fill="none" stroke="#59616a" stroke-width="13" filter="url(#soft)" />
            <path d="M643 549L660 531L679 522V560L638 577Z" fill="#a5b2c1" filter="url(#fine)" />
            <path d="M1026 504L1052 485L1072 523L1040 515Z" fill="#87939f" filter="url(#soft)" />
            <path :d="spline(glint)" fill="none" stroke="url(#gGlint)" stroke-width="3" filter="url(#fine)" />
          </g>
          <g fill="none" stroke="#340064" stroke-width="1.200">
            <path :d="spline(outerTop)" /><path :d="spline(innerTop)" /><path :d="spline(innerLow)" /><path :d="spline(outerLow)" />
            <path d="M620 582L626 588M1090 525L1086 531" />
          </g>
          <g fill="none" stroke="#8f929d" stroke-width="1">
            <path d="M393 306L490 388L638 513L845 689" /><path d="M393 533L490 575L617 630L753 689" />
            <path d="M762 176L755 260L748 368L800 630L812 689" /><path d="M816 176L833 260L870 442L896 570L920 689" />
            <path d="M1159 176L1254 640L1263 689" /><path d="M1283 480L1088 640L1031 689" />
          </g>
          <path d="M1159 176L1234 640L1242 689" fill="none" stroke="#783e46" />
          <path d="M598 593L606 600M612 592L621 600M598 615L607 623M1104 523L1100 532M1121 528L1117 536M1116 552L1110 561" stroke="#86585a" fill="none" />
          <path d="M773 686h4v3h-4z" fill="#25e825" />
        </svg>
        <div class="viewbar">
          <button v-for="v in viewTools" :key="v.icon" :class="{ on: v.on, more: v.more }" :aria-label="v.name"><svg class="i18"><use :href="'#' + v.icon" /></svg></button>
        </div>
        <p class="xstate">修剪状态:XSEC0001</p>
      </div>
    </main>

    <footer>
      <button class="sb on" aria-label="模型树"><svg class="tree-ic"><use href="#treetab" /></svg></button>
      <button class="sb" aria-label="浏览器"><svg class="i18"><use href="#globe" /></svg></button>
      <button class="sb" aria-label="全屏"><svg class="i18"><use href="#blank" /></svg></button>
      <i class="bar"></i>
      <p><i class="dot"></i>已成功创建组 LOCAL_GROUP_3。</p>
      <div class="finders">
        <i class="bar"></i><i class="bar wide"></i>
        <div class="find"><button aria-label="查找"><svg class="i18"><use href="#binoc" /></svg></button><button class="fdrop" aria-label="查找选项"><i class="tri"></i></button></div>
        <i class="bar"></i>
      </div>
    </footer>

    <div class="mark">
      <div class="wash"></div>
      <div class="slot"></div>
      <svg class="rings" viewBox="0 0 60 60" aria-hidden="true"><g fill="none" stroke-linecap="round"><ellipse cx="22" cy="20" rx="23" ry="13" transform="rotate(36 22 20)" stroke="#a3b4c3" stroke-width="2" /><path d="M3 14Q0 4 12 4t23 16" stroke="#93a7b9" stroke-width="4" /><path d="M42 23Q34 28 28 40" stroke="#dfa1a7" stroke-width="1" /><path d="M42 22Q57 17 56 32 54 46 36 56" stroke="#df9aa2" stroke-width="4" /></g></svg>
      <strong>野火论坛</strong>
      <div class="strip"></div>
      <span class="site">www.proewildfire.cn</span>
      <div class="ime">
        <svg class="sogou" viewBox="0 0 28 28" aria-hidden="true"><path d="m1 5 22-4q3 0 3 3l1 21q0 2-3 2L6 28q-2 0-2-2L0 8q0-2 1-3z" fill="#f2602f" /><path d="M21 8Q9 5 8 10t6 5 6 4-6 5-9-2" fill="none" stroke="#fff" stroke-width="4" /></svg>
        <button class="zh">中</button>
        <button class="zh">°,</button>
        <button v-for="n in imeTools" :key="n" :aria-label="n"><svg class="i16"><use :href="'#' + n" /></svg></button>
      </div>
    </div>
  </div>
</template>

<style>
body { margin: 0; }
</style>

<style scoped>
.window { position: relative; box-sizing: border-box; min-height: 100vh; display: flex; flex-direction: column; padding: 0 0 4px 4px; background: #b8bcbf; color: #3c3c3c; font: 12px/16px "Open Sans", "Noto Sans CJK SC", sans-serif; overflow: hidden; }
.sprites { position: absolute; width: 0; height: 0; }
button { display: flex; align-items: center; justify-content: center; margin: 0; padding: 0; border: 0; background: none; color: inherit; font: inherit; white-space: nowrap; }
svg { display: block; flex: none; }
.i12 { width: 12px; height: 12px; }
.i16 { width: 16px; height: 16px; }
.i18 { width: 18px; height: 18px; }
.i18t { width: 18px; height: 20px; }
.i19 { width: 19px; height: 19px; }
.i22 { width: 22px; height: 20px; }
.i32 { width: 32px; height: 32px; }
.tri { flex: none; width: 0; height: 0; border: 4px solid transparent; border-top: 4px solid #5a5a5a; border-bottom: 0; }
.tri.pale { border-top-color: #a9a9a9; }
.tri.up { border-top: 0; border-bottom: 5px solid #5a5a5a; }
.tri.grey { border-top-color: #8c8c8c; border-bottom-color: #8c8c8c; }
.tri.lined { position: relative; }
.tri.lined::before { content: ""; position: absolute; left: -4px; top: -7px; width: 8px; height: 1px; background: #333; }

.edge { display: flex; justify-content: space-between; height: 4px; margin-left: -4px; }
.edge span { width: 298px; height: 3px; background: linear-gradient(#7e8182, #a9acae); }

.titlebar { display: grid; grid-template-columns: 1fr auto 1fr; align-items: center; height: 32px; padding-bottom: 4px; background: #e3e3e3; box-sizing: border-box; }
.quick { display: flex; align-items: center; height: 24px; }
.q { width: 24px; height: 24px; }
.q.home { margin: 0 8px; }
.q.last { margin-right: 2px; }
.q.slimq { width: 18px; }
.qd { width: 13px; height: 24px; }
.bar { flex: none; width: 1px; height: 24px; margin-right: 3px; background: #b3b5b6; }
h1 { margin: 0; font-size: 14px; line-height: 20px; font-weight: 400; color: #b2b3b4; }
.winctl { display: flex; justify-content: flex-end; gap: 3px; padding-right: 3px; }
.winctl button { width: 24px; height: 24px; }

.tabs { display: flex; gap: 1px; height: 26px; background: #e3e3e3; border-bottom: 1px solid #c8cacc; box-sizing: border-box; }
.tabs > button { padding: 0 20px 2px; background: #cdd0d3; color: #444; font-size: 15px; line-height: 22px; }
.tabs > .file { padding: 0 25px 2px; background: #6b6b6b; color: #fff; margin-right: -1px; }
.tabs > .active { padding-bottom: 4px; margin-bottom: -1px; background: #f8f8f8; border-top: 1px solid #a5a5a5; color: #222; }
.aids { display: flex; align-items: center; margin: -9px 0 0 auto; }
.aids button { width: 24px; height: 24px; }
.aids .slim { width: 12px; }
.aids .helpb { width: 20px; margin-left: 4px; }

.ribbon { display: flex; background: #f8f8f8; border-bottom: 2px solid #a8a8a8; }
.group { display: flex; flex-direction: column; border-right: 1px solid #bfc2c4; }
.gbody { display: flex; gap: 8px; height: 87px; padding: 1px 7px 0; box-sizing: border-box; justify-content: center; }
.col { display: flex; flex-direction: column; align-items: flex-start; }
.small { height: 28px; gap: 4px; }
.small .tri { margin-left: 2px; }
.small:disabled { color: #b0b0b0; }
.big { flex-direction: column; justify-content: flex-start; min-width: 32px; padding-top: 5px; }
.big span { margin-top: 10px; }
.big .tri { margin-top: 6px; }
.gfoot { height: 25px; gap: 3px; padding: 0 5px; background: #edeff1; }
.rest { flex: 1; margin-top: 87px; background: #edeff1; }

main { flex: 1; display: flex; min-height: 0; }
aside { flex: none; display: flex; flex-direction: column; width: 386px; background: #edeff1; border-right: 2px solid #d0d1d3; box-shadow: 1px 0 0 #94979a; margin-right: 1px; box-sizing: content-box; }
.sidetabs { display: flex; height: 29px; background: #cfd0d1; }
.sidetabs button { gap: 4px; padding: 0 8px; background: #d9dddd; color: #707070; border-right: 1px solid #999; border-bottom: 1px solid #999; }
.sidetabs .on { gap: 5px; padding-left: 10px; background: #edeff1; color: #333; border-bottom-color: #edeff1; }
.tab-ic { width: 16px; height: 20px; }
.tree-ic { width: 13px; height: 16px; }
.sidehead { display: flex; align-items: center; height: 28px; padding: 0 7px 0 28px; gap: 12px; }
.sidehead h2 { flex: 1; margin: 0; font-size: 12px; line-height: 16px; font-weight: 500; color: #222; }
.sidehead button { gap: 6px; }
.filter { display: flex; align-items: center; height: 28px; padding: 0 6px 0 12px; gap: 4px; }
.field { position: relative; flex: 1; display: flex; }
.field input { flex: 1; min-width: 0; height: 29px; box-sizing: border-box; padding: 0 24px 0 6px; border: 1px solid #bfc2c4; border-radius: 0; background: #fff; font: inherit; outline: 0; }
.field button { position: absolute; right: 0; top: 0; width: 20px; height: 28px; }
.field button svg { width: 8px; height: 8px; }
.fd { width: 12px; height: 24px; }
.fa { width: 22px; height: 24px; }
.fa svg { width: 12px; height: 12px; }
.treebox { flex: 1 1 0; display: flex; margin: 5px 5px 5px 8px; min-height: 0; overflow: hidden; background: #fdfdfd; border-top: 1px solid #c9cbcd; }
ul { flex: 1; margin: -16px 0 0; padding: 0; list-style: none; }
li { display: flex; align-items: center; height: 24px; padding-left: 7px; }
li span { margin-left: 5px; line-height: 16px; color: #404040; }
li.off span { color: #b5b5b5; }
li.deep { padding-left: 27px; }
.exp { flex: none; width: 10px; height: 10px; margin-right: 6px; }
.exp.closed::before { content: ""; margin-left: 2px; border: 5px solid transparent; border-left: 7px solid #7d7d7d; border-right: 0; }
.exp.open::before { content: ""; border: 5px solid transparent; border-top: 7px solid #7d7d7d; border-bottom: 0; }
.scroll { display: flex; flex-direction: column; width: 15px; }
.scroll button { height: 15px; border: 1px solid #c4c6c8; box-sizing: border-box; background: #fafafa; }
.track { flex: 1; display: flex; flex-direction: column; justify-content: flex-end; background: #e0e1e3; }
.thumb { height: 79%; box-sizing: border-box; border: 1px solid #b7babc; background: #f7f7f7; }

.stage { position: relative; flex: 1; min-width: 0; background: #e8e9ed; overflow: hidden; }
.scene { position: absolute; inset: 0; width: 100%; height: 100%; }
.viewbar { position: absolute; left: 5px; top: 95px; display: flex; flex-direction: column; justify-content: space-between; align-items: center; width: 33px; height: 322px; box-sizing: border-box; padding: 2px 0; border: 1px solid #9c9fa2; background: #f8f8f8; }
.viewbar button { position: relative; width: 24px; height: 24px; box-sizing: border-box; }
.viewbar .on { background: #dedfe0; border: 1px solid #a9abad; }
.viewbar .more::after { content: ""; position: absolute; right: 1px; bottom: 1px; border: 2px solid #555; border-top-color: transparent; border-left-color: transparent; }
.xstate { position: absolute; left: 6px; top: 467px; margin: 0; font-size: 9px; line-height: 14px; color: #8c8f9c; }

footer { display: flex; align-items: flex-start; height: 35px; padding: 6px 0 0 6px; box-sizing: border-box; background: #edeff1; border-top: 2px solid #999b9d; }
.sb { width: 22px; height: 22px; margin: 1px 4px 0 0; box-sizing: border-box; }
.sb.on { border: 1px solid #a9abad; background: #dedfe0; }
footer > .bar { margin: 0 6px 0 5px; }
footer p { display: flex; align-items: center; gap: 5px; margin: 1px 0 0; }
.dot { width: 5px; height: 5px; border-radius: 50%; background: #1c5f80; }
.finders { display: flex; align-items: flex-start; margin: -2px 290px 0 auto; }
.finders .bar { height: 27px; margin: 0; }
.finders .wide { margin-left: 40px; }
.find { display: flex; margin: 0 2px; border: 1px solid #bfc2c4; background: #fafafa; }
.find button { width: 26px; height: 22px; }
.find .fdrop { width: 14px; border-left: 1px solid #bfc2c4; }

.mark { position: absolute; right: 0; bottom: 0; width: 211px; height: 67px; overflow: hidden; pointer-events: none; }
.wash { position: absolute; left: 0; top: 0; width: 206px; height: 63px; background: #fff; opacity: .25; }
.slot { position: absolute; left: 18px; top: 34px; width: 175px; height: 20px; border: 1px solid #c9cccf; background: #f5f6f7; opacity: .8; }
.rings { position: absolute; left: 1px; top: 1px; width: 60px; height: 60px; opacity: .85; }
.mark strong { position: absolute; left: 69px; top: 5px; font-size: 29px; line-height: 32px; font-weight: 900; color: #93cdad; }
.strip { position: absolute; left: 29px; right: 0; bottom: 4px; height: 18px; background: #fff; opacity: .85; }
.site { position: absolute; left: 58px; top: 39px; font-size: 15px; line-height: 18px; color: #bfe0d6; opacity: .8; }
.ime { position: absolute; left: 5px; right: 0; bottom: 0; display: flex; height: 26px; align-items: center; }
.sogou { width: 28px; height: 28px; margin-right: 2px; }
.ime button { width: 22px; height: 22px; }
.ime .zh { color: #3d86cc; font-size: 15px; font-weight: 700; }
</style>
